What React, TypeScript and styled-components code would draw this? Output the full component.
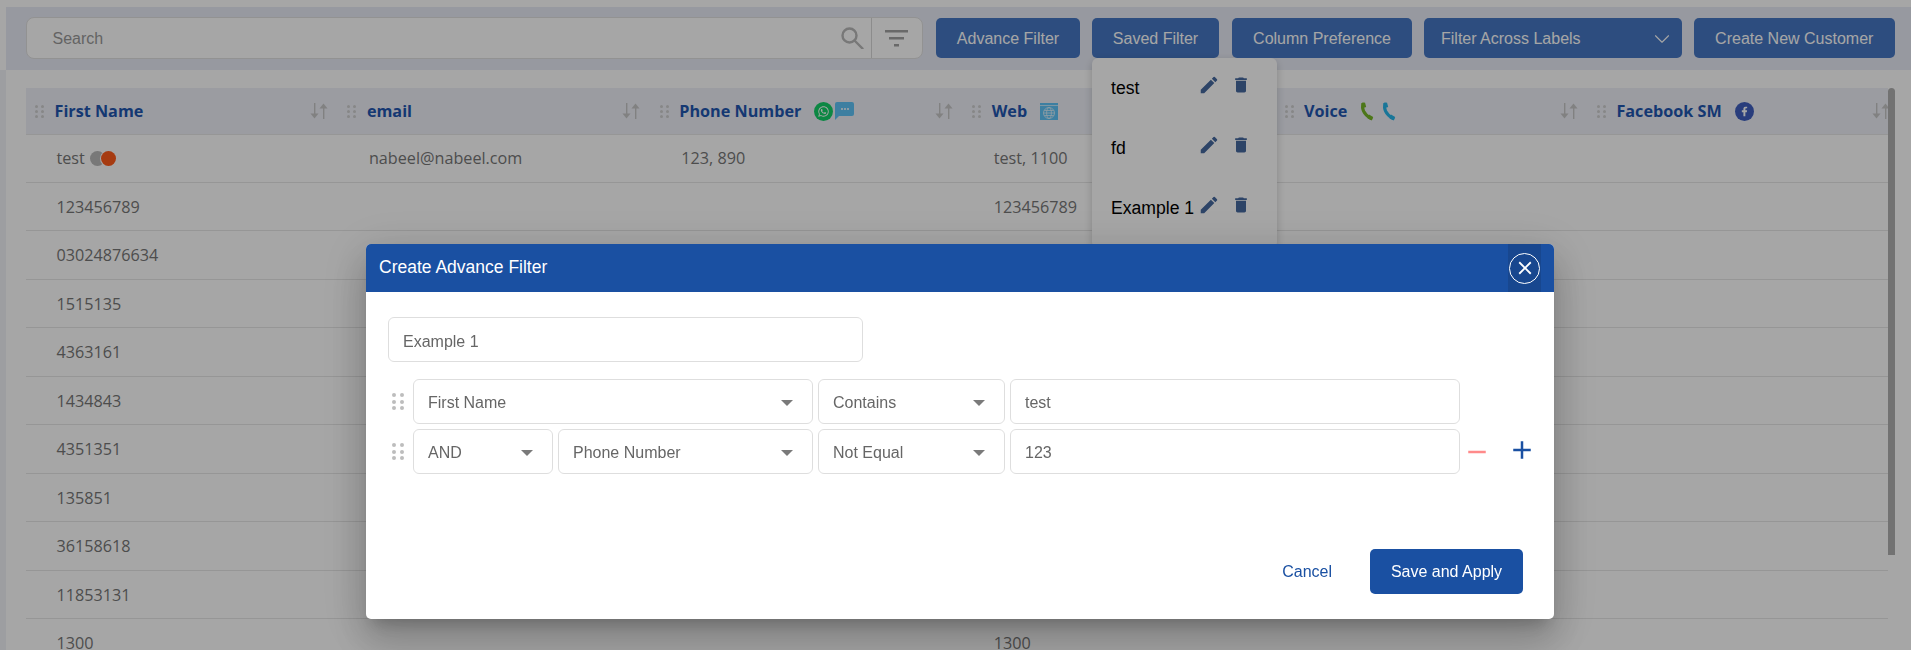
import styled, { createGlobalStyle } from 'styled-components';
import { FaWhatsapp, FaFacebookF } from 'react-icons/fa';
import { MdEdit, MdDelete, MdClose, MdAdd, MdRemove } from 'react-icons/md';
import { FiChevronDown } from 'react-icons/fi';

const GlobalStyle = createGlobalStyle`
  html, body {
    margin: 0;
    height: 100%;
    overflow: hidden;
    background: #fff;
    font-family: 'Liberation Sans', Arial, sans-serif;
  }
  * {
    box-sizing: border-box;
  }
`;

const Page = styled.div`
  height: 650px;
  padding-top: 7px;
  overflow: hidden;
`;

const Toolbar = styled.div`
  position: relative;
  z-index: 2;
  margin-left: 6px;
  height: 63px;
  padding: 10px 0 0 19.5px;
  background: #e9ecf6;
  display: flex;
  align-items: flex-start;
`;

const SearchBox = styled.div`
  width: 897px;
  height: 42px;
  margin-right: 13.5px;
  padding: 2px 0 0 26px;
  background: #fff;
  border: 1px solid #e0e0e0;
  border-radius: 8px;
  display: flex;
  align-items: center;
  font-size: 16px;
  color: #999;
`;

const SearchText = styled.span`
  flex: 1;
`;

const SearchIcons = styled.div`
  display: flex;
  align-items: center;
  height: 100%;
  margin-top: -2px;
  padding-right: 14px;
  svg {
    display: block;
  }
`;

const IconDivider = styled.div`
  width: 1px;
  height: 40px;
  margin: 0 13px 0 7px;
  background: #d8d8d8;
`;

const ToolButton = styled.button<{ $w: number; $gap?: number }>`
  width: ${(p) => p.$w}px;
  height: 40px;
  margin-top: 1px;
  margin-right: ${(p) => p.$gap ?? 12}px;
  padding: 1px 0 0;
  border: none;
  border-radius: 5px;
  background: #4677c3;
  color: #fff;
  font-family: inherit;
  font-size: 16px;
  position: relative;
`;

const LabelSelect = styled(ToolButton)`
  display: flex;
  align-items: center;
  justify-content: space-between;
  padding: 1px 7px 0 17px;
`;

const Popover = styled.div`
  position: absolute;
  top: 40px;
  left: 0;
  width: 185px;
  height: 190px;
  padding-left: 19px;
  background: #fff;
  border-radius: 6px;
  box-shadow: 0 3px 8px rgba(0, 0, 0, 0.2);
  color: #000;
  font-size: 17.6px;
  text-align: left;
`;

const SavedRow = styled.div`
  height: 60px;
  display: flex;
  align-items: center;
  svg {
    display: block;
    flex: none;
    margin-top: -6px;
    color: #46699f;
  }
  svg + svg {
    margin-left: 11px;
  }
`;

const SavedName = styled.span`
  width: 87px;
  flex: none;
  white-space: nowrap;
`;

const Content = styled.div`
  display: flex;
  height: 580px;
`;

const LeftStrip = styled.div`
  width: 6px;
  background: #f2f3f8;
`;

const TableWrap = styled.div`
  position: relative;
  width: 1869px;
  margin: 18px 0 0 20px;
  padding-right: 7px;
  font-family: 'Open Sans', sans-serif;
`;

const Table = styled.div`
  width: 100%;
  overflow: hidden;
`;

const Scrollbar = styled.div`
  position: absolute;
  top: 0;
  right: 0;
  width: 7px;
  height: 467px;
  background: #b0b0b0;
  border-radius: 4px 4px 0 0;
`;

const Row = styled.div`
  display: grid;
  grid-template-columns: repeat(6, 312.4px);
`;

const HeadRow = styled(Row)`
  height: 47px;
  background: #eef0f8;
  border-bottom: 1px solid #e6e6e6;
`;

const HeadCell = styled.div`
  display: flex;
  align-items: center;
  position: relative;
  padding-left: 9px;
  font-size: 16.2px;
  font-weight: 700;
  color: #1f56b0;
`;

const HeadTitle = styled.span`
  margin-left: 10.5px;
  margin-right: 13px;
`;

const HeadIcons = styled.span<{ $gap: number }>`
  display: flex;
  align-items: center;
  gap: ${(p) => p.$gap}px;
  svg {
    display: block;
  }
`;

const SortIcon = styled.svg`
  position: absolute;
  left: 284px;
  top: 15px;
`;

const BodyRow = styled(Row)`
  height: 48.5px;
  padding-top: 1px;
  border-bottom: 1px solid #e6e6e6;
  font-size: 16.2px;
  color: #777;
  &:nth-child(2) {
    height: 47.5px;
    padding-top: 0;
  }
`;

const Cell = styled.div`
  display: flex;
  align-items: center;
  padding-left: 30.5px;
`;

const StatusDots = styled.span`
  display: flex;
  margin-left: 5px;
`;

const Dot = styled.span<{ $color: string }>`
  width: 15px;
  height: 15px;
  border-radius: 50%;
  background: ${(p) => p.$color};
  & + & {
    margin-left: -4px;
    box-shadow: 0 0 0 1px #fff;
  }
`;

const GripGrid = styled.span<{ $dot: number; $color: string; $gapX: number; $gapY: number }>`
  display: grid;
  flex: none;
  grid-template-columns: repeat(2, ${(p) => p.$dot}px);
  grid-auto-rows: ${(p) => p.$dot}px;
  column-gap: ${(p) => p.$gapX}px;
  row-gap: ${(p) => p.$gapY}px;
  i {
    border-radius: 50%;
    background: ${(p) => p.$color};
  }
`;

const Overlay = styled.div`
  position: fixed;
  inset: 0;
  z-index: 3;
  background: rgba(0, 0, 0, 0.35);
`;

const Modal = styled.div`
  position: absolute;
  left: 366px;
  top: 244px;
  width: 1188px;
  height: 375px;
  background: #fff;
  border-radius: 5px;
  display: flex;
  flex-direction: column;
  box-shadow: 0 11px 15px -7px rgba(0, 0, 0, 0.2), 0 24px 38px 3px rgba(0, 0, 0, 0.14),
    0 9px 46px 8px rgba(0, 0, 0, 0.12);
`;

const ModalHeader = styled.div`
  height: 48px;
  flex: none;
  padding-left: 13px;
  background: #1a50a2;
  color: #fff;
  border-radius: 5px 5px 0 0;
  display: flex;
  align-items: center;
  justify-content: space-between;
  font-size: 17.5px;
`;

const ModalTitle = styled.span`
  margin-top: -2px;
`;

const CloseArea = styled.div`
  width: 33px;
  height: 48px;
  margin-right: 13px;
  background: #18478f;
  display: flex;
  align-items: center;
  justify-content: center;
`;

const CloseCircle = styled.div`
  width: 31px;
  height: 31px;
  border: 1px solid #fff;
  border-radius: 50%;
  display: flex;
  align-items: center;
  justify-content: center;
`;

const ModalBody = styled.div`
  flex: 1;
  padding: 25px 0 0 22px;
`;

const NameField = styled.div`
  width: 475px;
  height: 45px;
  padding: 5px 0 0 14px;
  margin-bottom: 17px;
  border: 1px solid #dedede;
  border-radius: 6px;
  display: flex;
  align-items: center;
  font-size: 16px;
  color: #666;
`;

const FilterRow = styled.div`
  display: flex;
  align-items: center;
  gap: 5.5px;
  height: 45px;
  margin-bottom: 5px;
`;

const GripSlot = styled.div`
  width: 19.5px;
  padding-left: 4px;
`;

const Field = styled.div<{ $w: number }>`
  width: ${(p) => p.$w}px;
  height: 45px;
  padding: 3px 19px 0 14px;
  border: 1px solid #dedede;
  border-radius: 6px;
  display: flex;
  align-items: center;
  justify-content: space-between;
  font-size: 16px;
  color: #666;
`;

const Caret = styled.span`
  width: 0;
  height: 0;
  border-left: 6px solid transparent;
  border-right: 6px solid transparent;
  border-top: 6px solid #7a7a7a;
`;

const RowActions = styled.div`
  display: flex;
  align-items: center;
  margin-left: -3px;
  svg {
    display: block;
  }
  svg + svg {
    margin: -3px 0 0 14.5px;
  }
`;

const ModalFooter = styled.div`
  display: flex;
  align-items: center;
  justify-content: flex-end;
  padding: 0 31px 25px 0;
`;

const CancelLink = styled.span`
  margin-right: 38px;
  font-size: 16px;
  color: #1a50a2;
`;

const SaveButton = styled.button`
  width: 153px;
  height: 45px;
  border: none;
  border-radius: 5px;
  background: #1a50a2;
  color: #fff;
  font-family: inherit;
  font-size: 16px;
`;

const Grip = ({ big }: { big?: boolean }) => (
  <GripGrid
    $dot={big ? 4 : 3}
    $color={big ? '#bdbdbd' : '#cfcfcf'}
    $gapX={big ? 3.5 : 3}
    $gapY={big ? 2.5 : 2}
  >
    {[0, 1, 2, 3, 4, 5].map((i) => (
      <i key={i} />
    ))}
  </GripGrid>
);

const Sort = () => (
  <SortIcon width="18" height="16" viewBox="0 0 18 16" fill="#c6c6c6">
    <rect x="4" y="0" width="1.4" height="12" />
    <path d="M0.5 10.5h8l-4 5z" />
    <rect x="13" y="4" width="1.4" height="12" />
    <path d="M9.5 5.5h8l-4-5z" />
  </SortIcon>
);

const WhatsappBadge = () => (
  <svg width="19" height="19" viewBox="0 0 19 19">
    <circle cx="9.5" cy="9.5" r="9.5" fill="#13d068" />
    <g transform="translate(3.5 3.5)">
      <FaWhatsapp size={12} color="#fff" />
    </g>
  </svg>
);

const ChatBubble = () => (
  <svg width="19" height="18" viewBox="0 0 19 18">
    <path d="M2 0h15a2 2 0 0 1 2 2v10a2 2 0 0 1-2 2H4l-4 4V2a2 2 0 0 1 2-2z" fill="#5fc4f7" />
    <circle cx="7" cy="7" r="1" fill="#fff" />
    <circle cx="10" cy="7" r="1" fill="#fff" />
    <circle cx="13" cy="7" r="1" fill="#fff" />
  </svg>
);

const WebIcon = () => (
  <svg width="18" height="17" viewBox="0 0 18 17">
    <rect width="18" height="17" fill="#5fc4f7" />
    <rect y="2" width="18" height="1" fill="#fff" opacity="0.6" />
    <g fill="none" stroke="#fff" strokeWidth="0.8" opacity="0.8">
      <circle cx="9" cy="10" r="5.5" />
      <ellipse cx="9" cy="10" rx="2.4" ry="5.5" />
      <path d="M3.5 10h11M4.3 7.5h9.4M4.3 12.5h9.4" />
    </g>
  </svg>
);

const PhoneMark = ({ color }: { color: string }) => (
  <svg width="14" height="19" viewBox="0 0 14 19" fill="none">
    <path d="M3 2C1.5 6 3.5 12.5 11 16.5" stroke={color} strokeWidth="3" strokeLinecap="round" />
    <path d="M1 1.5L5 .5l1.2 4.5-3 1zM9 12.5l4.2 2.5-1.5 3.5-4-2z" fill={color} />
  </svg>
);

const FacebookBadge = () => (
  <svg width="19" height="19" viewBox="0 0 19 19">
    <circle cx="9.5" cy="9.5" r="9.5" fill="#3f5fbf" />
    <g transform="translate(4.5 4.5)">
      <FaFacebookF size={10} color="#fff" />
    </g>
  </svg>
);

const columns = [
  { title: 'First Name', gap: 2 },
  { title: 'email', gap: 2 },
  { title: 'Phone Number', gap: 2, icons: [<WhatsappBadge key="w" />, <ChatBubble key="c" />] },
  { title: 'Web', gap: 2, icons: [<WebIcon key="w" />] },
  { title: 'Voice', gap: 8, icons: [<PhoneMark key="g" color="#76b627" />, <PhoneMark key="b" color="#27b5ea" />] },
  { title: 'Facebook SM', gap: 2, icons: [<FacebookBadge key="f" />] },
];

const rows = [
  ['test', 'nabeel@nabeel.com', '123, 890', 'test, 1100'],
  ['123456789', '', '', '123456789'],
  ['03024876634'],
  ['1515135'],
  ['4363161'],
  ['1434843'],
  ['4351351'],
  ['135851'],
  ['36158618'],
  ['11853131'],
  ['1300', '', '', '1300'],
];

const saved = ['test', 'fd', 'Example 1'];

export default function App() {
  return (
    <Page>
      <GlobalStyle />
      <Toolbar>
        <SearchBox>
          <SearchText>Search</SearchText>
          <SearchIcons>
            <svg width="23" height="22" viewBox="0 0 23 22" fill="none" stroke="#b8b8b8" strokeWidth="2.4">
              <circle cx="8.5" cy="8.5" r="7" />
              <path d="M13.5 13.5l8 8" strokeLinecap="round" />
            </svg>
            <IconDivider />
            <svg width="23" height="17" viewBox="0 0 23 17" fill="#a2a2a2">
              <rect width="23" height="2.5" />
              <rect x="4" y="7" width="15" height="2.5" />
              <rect x="9" y="14" width="5" height="2.5" />
            </svg>
          </SearchIcons>
        </SearchBox>
        <ToolButton $w={144}>Advance Filter</ToolButton>
        <ToolButton $w={127} $gap={13}>
          Saved Filter
          <Popover>
            {saved.map((name) => (
              <SavedRow key={name}>
                <SavedName>{name}</SavedName>
                <MdEdit size={22} />
                <MdDelete size={20} />
              </SavedRow>
            ))}
          </Popover>
        </ToolButton>
        <ToolButton $w={180}>Column Preference</ToolButton>
        <LabelSelect $w={258}>
          Filter Across Labels
          <FiChevronDown size={26} strokeWidth={1} />
        </LabelSelect>
        <ToolButton $w={200.5} $gap={0}>
          Create New Customer
        </ToolButton>
      </Toolbar>
      <Content>
        <LeftStrip />
        <TableWrap>
          <Table>
            <HeadRow>
              {columns.map((c) => (
                <HeadCell key={c.title}>
                  <Grip />
                  <HeadTitle>{c.title}</HeadTitle>
                  <HeadIcons $gap={c.gap}>{c.icons}</HeadIcons>
                  <Sort />
                </HeadCell>
              ))}
            </HeadRow>
            {rows.map((r, i) => (
              <BodyRow key={i}>
                {[0, 1, 2, 3, 4, 5].map((c) => (
                  <Cell key={c}>
                    {r[c]}
                    {i === 0 && c === 0 && (
                      <StatusDots>
                        <Dot $color="#b9b9b9" />
                        <Dot $color="#ff5b1b" />
                      </StatusDots>
                    )}
                  </Cell>
                ))}
              </BodyRow>
            ))}
          </Table>
          <Scrollbar />
        </TableWrap>
      </Content>
      <Overlay>
        <Modal>
          <ModalHeader>
            <ModalTitle>Create Advance Filter</ModalTitle>
            <CloseArea>
              <CloseCircle>
                <MdClose size={22} color="#fff" />
              </CloseCircle>
            </CloseArea>
          </ModalHeader>
          <ModalBody>
            <NameField>Example 1</NameField>
            <FilterRow>
              <GripSlot>
                <Grip big />
              </GripSlot>
              <Field $w={399.5}>
                First Name
                <Caret />
              </Field>
              <Field $w={186.5}>
                Contains
                <Caret />
              </Field>
              <Field $w={449.5}>test</Field>
            </FilterRow>
            <FilterRow>
              <GripSlot>
                <Grip big />
              </GripSlot>
              <Field $w={139.5}>
                AND
                <Caret />
              </Field>
              <Field $w={254.5}>
                Phone Number
                <Caret />
              </Field>
              <Field $w={186.5}>
                Not Equal
                <Caret />
              </Field>
              <Field $w={449.5}>123</Field>
              <RowActions>
                <MdRemove size={30} color="#ff8a8a" />
                <MdAdd size={30} color="#1a50a2" />
              </RowActions>
            </FilterRow>
          </ModalBody>
          <ModalFooter>
            <CancelLink>Cancel</CancelLink>
            <SaveButton>Save and Apply</SaveButton>
          </ModalFooter>
        </Modal>
      </Overlay>
    </Page>
  );
}
